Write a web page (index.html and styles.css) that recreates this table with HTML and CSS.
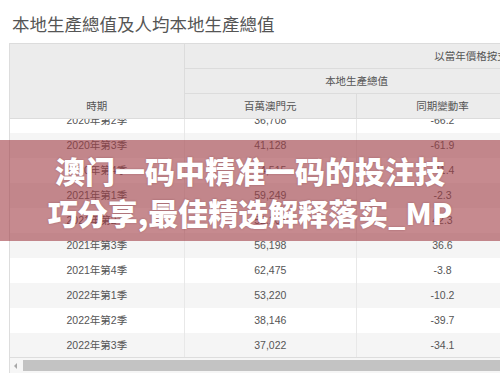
FILE: index.html
```html
<!DOCTYPE html>
<html lang="zh-Hant">
<head>
<meta charset="utf-8">
<title>本地生產總值及人均本地生產總值</title>
<link rel="stylesheet" href="styles.css">
</head>
<body>
<div class="page">
  <h1 class="title">本地生產總值及人均本地生產總值</h1>
  <div class="frame">
    <table class="grid head">
      <colgroup><col class="c1"><col class="cn"><col class="cn"><col class="cn"><col class="cn"></colgroup>
      <tr>
        <th rowspan="3" class="period">時期</th>
        <th colspan="4" class="nodiv">以當年價格按支出法計算之本地生產總值</th>
      </tr>
      <tr>
        <th colspan="2" class="nodiv">本地生產總值</th>
        <th colspan="2" class="nodiv">人均本地生產總值</th>
      </tr>
      <tr>
        <th>百萬澳門元</th>
        <th>同期變動率</th>
        <th>澳門元</th>
        <th>同期變動率</th>
      </tr>
    </table>
    <div class="body-view">
      <table class="grid rows">
        <colgroup><col class="c1"><col class="cn"><col class="cn"><col class="cn"><col class="cn"></colgroup>
        <tr><td>2020年第2季</td><td>36,708</td><td>-66.2</td><td>53,907</td><td>-66.7</td></tr>
        <tr class="alt"><td>2020年第3季</td><td>41,128</td><td>-61.9</td><td>60,379</td><td>-62.5</td></tr>
        <tr><td>2020年第4季</td><td>54,515</td><td>-41.4</td><td>80,018</td><td>-42.3</td></tr>
        <tr class="alt"><td>2021年第1季</td><td>59,249</td><td>-2.3</td><td>86,986</td><td>-3.5</td></tr>
        <tr><td>2021年第2季</td><td>52,105</td><td>42.3</td><td>76,541</td><td>42.0</td></tr>
        <tr class="alt"><td>2021年第3季</td><td>56,198</td><td>36.6</td><td>82,540</td><td>36.7</td></tr>
        <tr><td>2021年第4季</td><td>62,475</td><td>-3.8</td><td>91,756</td><td>-3.8</td></tr>
        <tr class="alt"><td>2022年第1季</td><td>53,220</td><td>-10.2</td><td>78,138</td><td>-10.2</td></tr>
        <tr><td>2022年第2季</td><td>38,146</td><td>-39.7</td><td>56,009</td><td>-39.7</td></tr>
        <tr class="alt"><td>2022年第3季</td><td>37,022</td><td>-34.1</td><td>54,391</td><td>-34.1</td></tr>
      </table>
    </div>
    <div class="hscroll">
      <span class="arrow"></span>
      <span class="thumb"></span>
    </div>
  </div>
  <div class="banner">
    <p class="banner-text">澳门一码中精准一码的投注技巧分享,最佳精选解释落实_MP</p>
  </div>
</div>
</body>
</html>
```
FILE: styles.css
```css
html, body {
  margin: 0;
  padding: 0;
  background: #ffffff;
}

.page {
  position: relative;
  width: 500px;
  height: 383px;
  overflow: hidden;
  font-family: "Liberation Sans", "Noto Sans CJK TC", sans-serif;
  color: #555555;
}

.title {
  margin: 13px 0 0 12px;
  font-size: 17.5px;
  line-height: 24px;
  font-weight: normal;
  color: #555555;
  white-space: nowrap;
}

.frame {
  margin: 6px 0 0 9px;
  width: 864px;
  border-left: 1px solid #dddddd;
}

.grid {
  border-collapse: collapse;
  table-layout: fixed;
  width: 863px;
  font-size: 10.5px;
}

.c1 { width: 174px; }
.cn { width: 172px; }

.head th {
  height: 24px;
  padding: 0;
  line-height: 24px;
  font-weight: normal;
  color: #555555;
  background: #ececec;
  border-top: 1px solid #dcdcdc;
  border-bottom: 1px solid #dcdcdc;
  border-left: 1px solid #dcdcdc;
  text-align: center;
  white-space: nowrap;
}

.head th.period {
  vertical-align: bottom;
  border-left: none;
}

.head th.nodiv {
  border-left: none;
}

.head tr:first-child th.period + th {
  border-left: 1px solid #dcdcdc;
}

.head tr:nth-child(2) th:first-child {
  border-left: 1px solid #dcdcdc;
}

.body-view {
  height: 238px;
  overflow: hidden;
  border-bottom: 1px solid #dddddd;
}

.rows {
  margin-top: -11px;
}

.rows td {
  height: 25px;
  padding: 0;
  line-height: 25px;
  text-align: center;
  color: #555555;
  background: #ffffff;
  border-left: 1px solid #e8e8e8;
  white-space: nowrap;
}

.rows td:first-child {
  border-left: none;
}

.rows tr.alt td {
  background: #f5f5f5;
}

.hscroll {
  display: flex;
  align-items: center;
  height: 15px;
  background: #f6f6f6;
}

.arrow {
  width: 0;
  height: 0;
  margin: 0 6px 0 4px;
  border-top: 3px solid transparent;
  border-bottom: 3px solid transparent;
  border-right: 3px solid #a8a8a8;
}

.thumb {
  flex: 1;
  height: 11px;
  background: #c3c3c3;
}

.banner {
  position: absolute;
  left: 0;
  top: 140px;
  width: 500px;
  height: 101px;
  background: rgba(160, 60, 68, 0.6);
  display: flex;
  align-items: center;
  justify-content: center;
}

.banner-text {
  margin: 0;
  width: 410px;
  font-family: "Noto Sans CJK SC", sans-serif;
  font-weight: 900;
  font-size: 30px;
  line-height: 42px;
  color: #ffffff;
  text-align: center;
  text-shadow: 0 0 2px rgba(80, 20, 30, 0.35);
}
```
